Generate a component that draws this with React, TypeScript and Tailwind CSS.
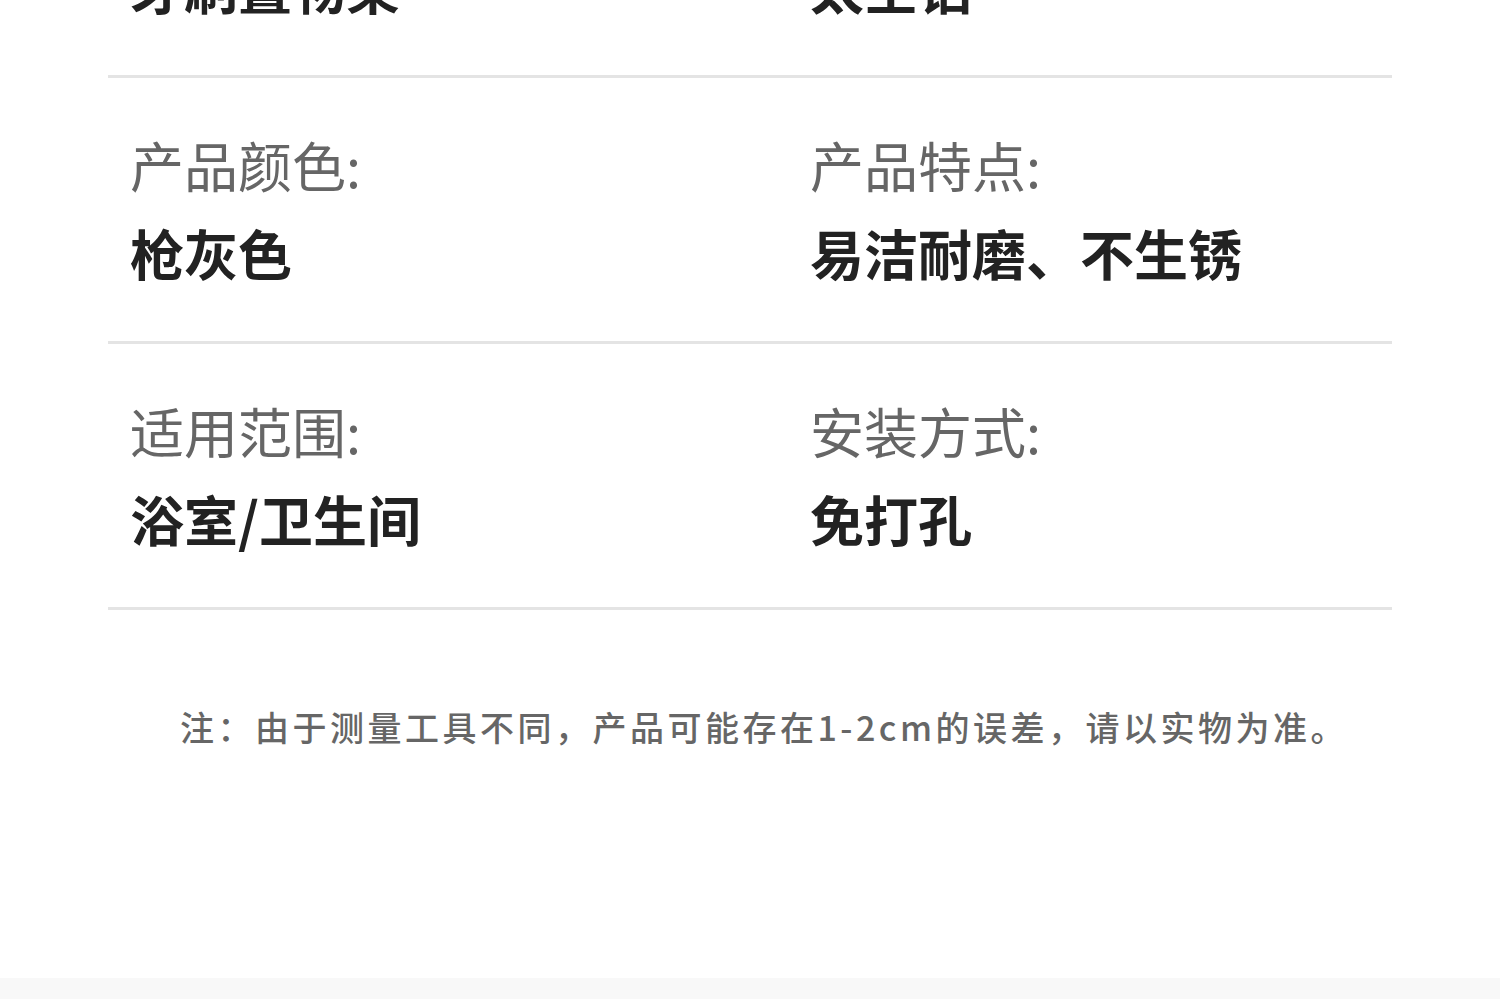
import React from 'react';

const specs = [
  { leftLabel: '产品名称:', leftValue: '牙刷置物架', rightLabel: '产品材质:', rightValue: '太空铝' },
  { leftLabel: '产品颜色:', leftValue: '枪灰色', rightLabel: '产品特点:', rightValue: '易洁耐磨、不生锈' },
  { leftLabel: '适用范围:', leftValue: '浴室/卫生间', rightLabel: '安装方式:', rightValue: '免打孔' },
];

const font = { fontFamily: '"Noto Sans CJK SC", "Noto Sans", sans-serif' };

const Cell: React.FC<{ label: string; value: string }> = ({ label, value }) => (
  <div className="flex flex-col gap-[34px]">
    <div className="text-[54px] leading-[54px] text-[#666666] whitespace-nowrap">{label}</div>
    <div className="text-[54px] leading-[54px] font-bold text-[#222222] whitespace-nowrap">{value}</div>
  </div>
);

const App: React.FC = () => {
  return (
    <div className="min-h-screen bg-white overflow-hidden" style={font}>
      {/* first row is scrolled partly out of view, as in the long product image */}
      <div className="mx-[108px] -mt-[188px]">
        {specs.map((row, i) => (
          <div
            key={i}
            className="grid grid-cols-[680px_1fr] pl-[22px] pt-[60px] pb-[61px] border-b-[3px] border-[#e4e4e4]"
          >
            <Cell label={row.leftLabel} value={row.leftValue} />
            <Cell label={row.rightLabel} value={row.rightValue} />
          </div>
        ))}
      </div>

      <p className="mt-[99px] pl-[28px] text-center text-[34px] leading-[36px] tracking-[3.5px] font-medium text-[#666666] whitespace-nowrap">
        注：由于测量工具不同，产品可能存在1-2cm的误差，请以实物为准。
      </p>

      <div className="mt-[233px] h-[60px] bg-[#f8f8f8]" />
    </div>
  );
};

export default App;
